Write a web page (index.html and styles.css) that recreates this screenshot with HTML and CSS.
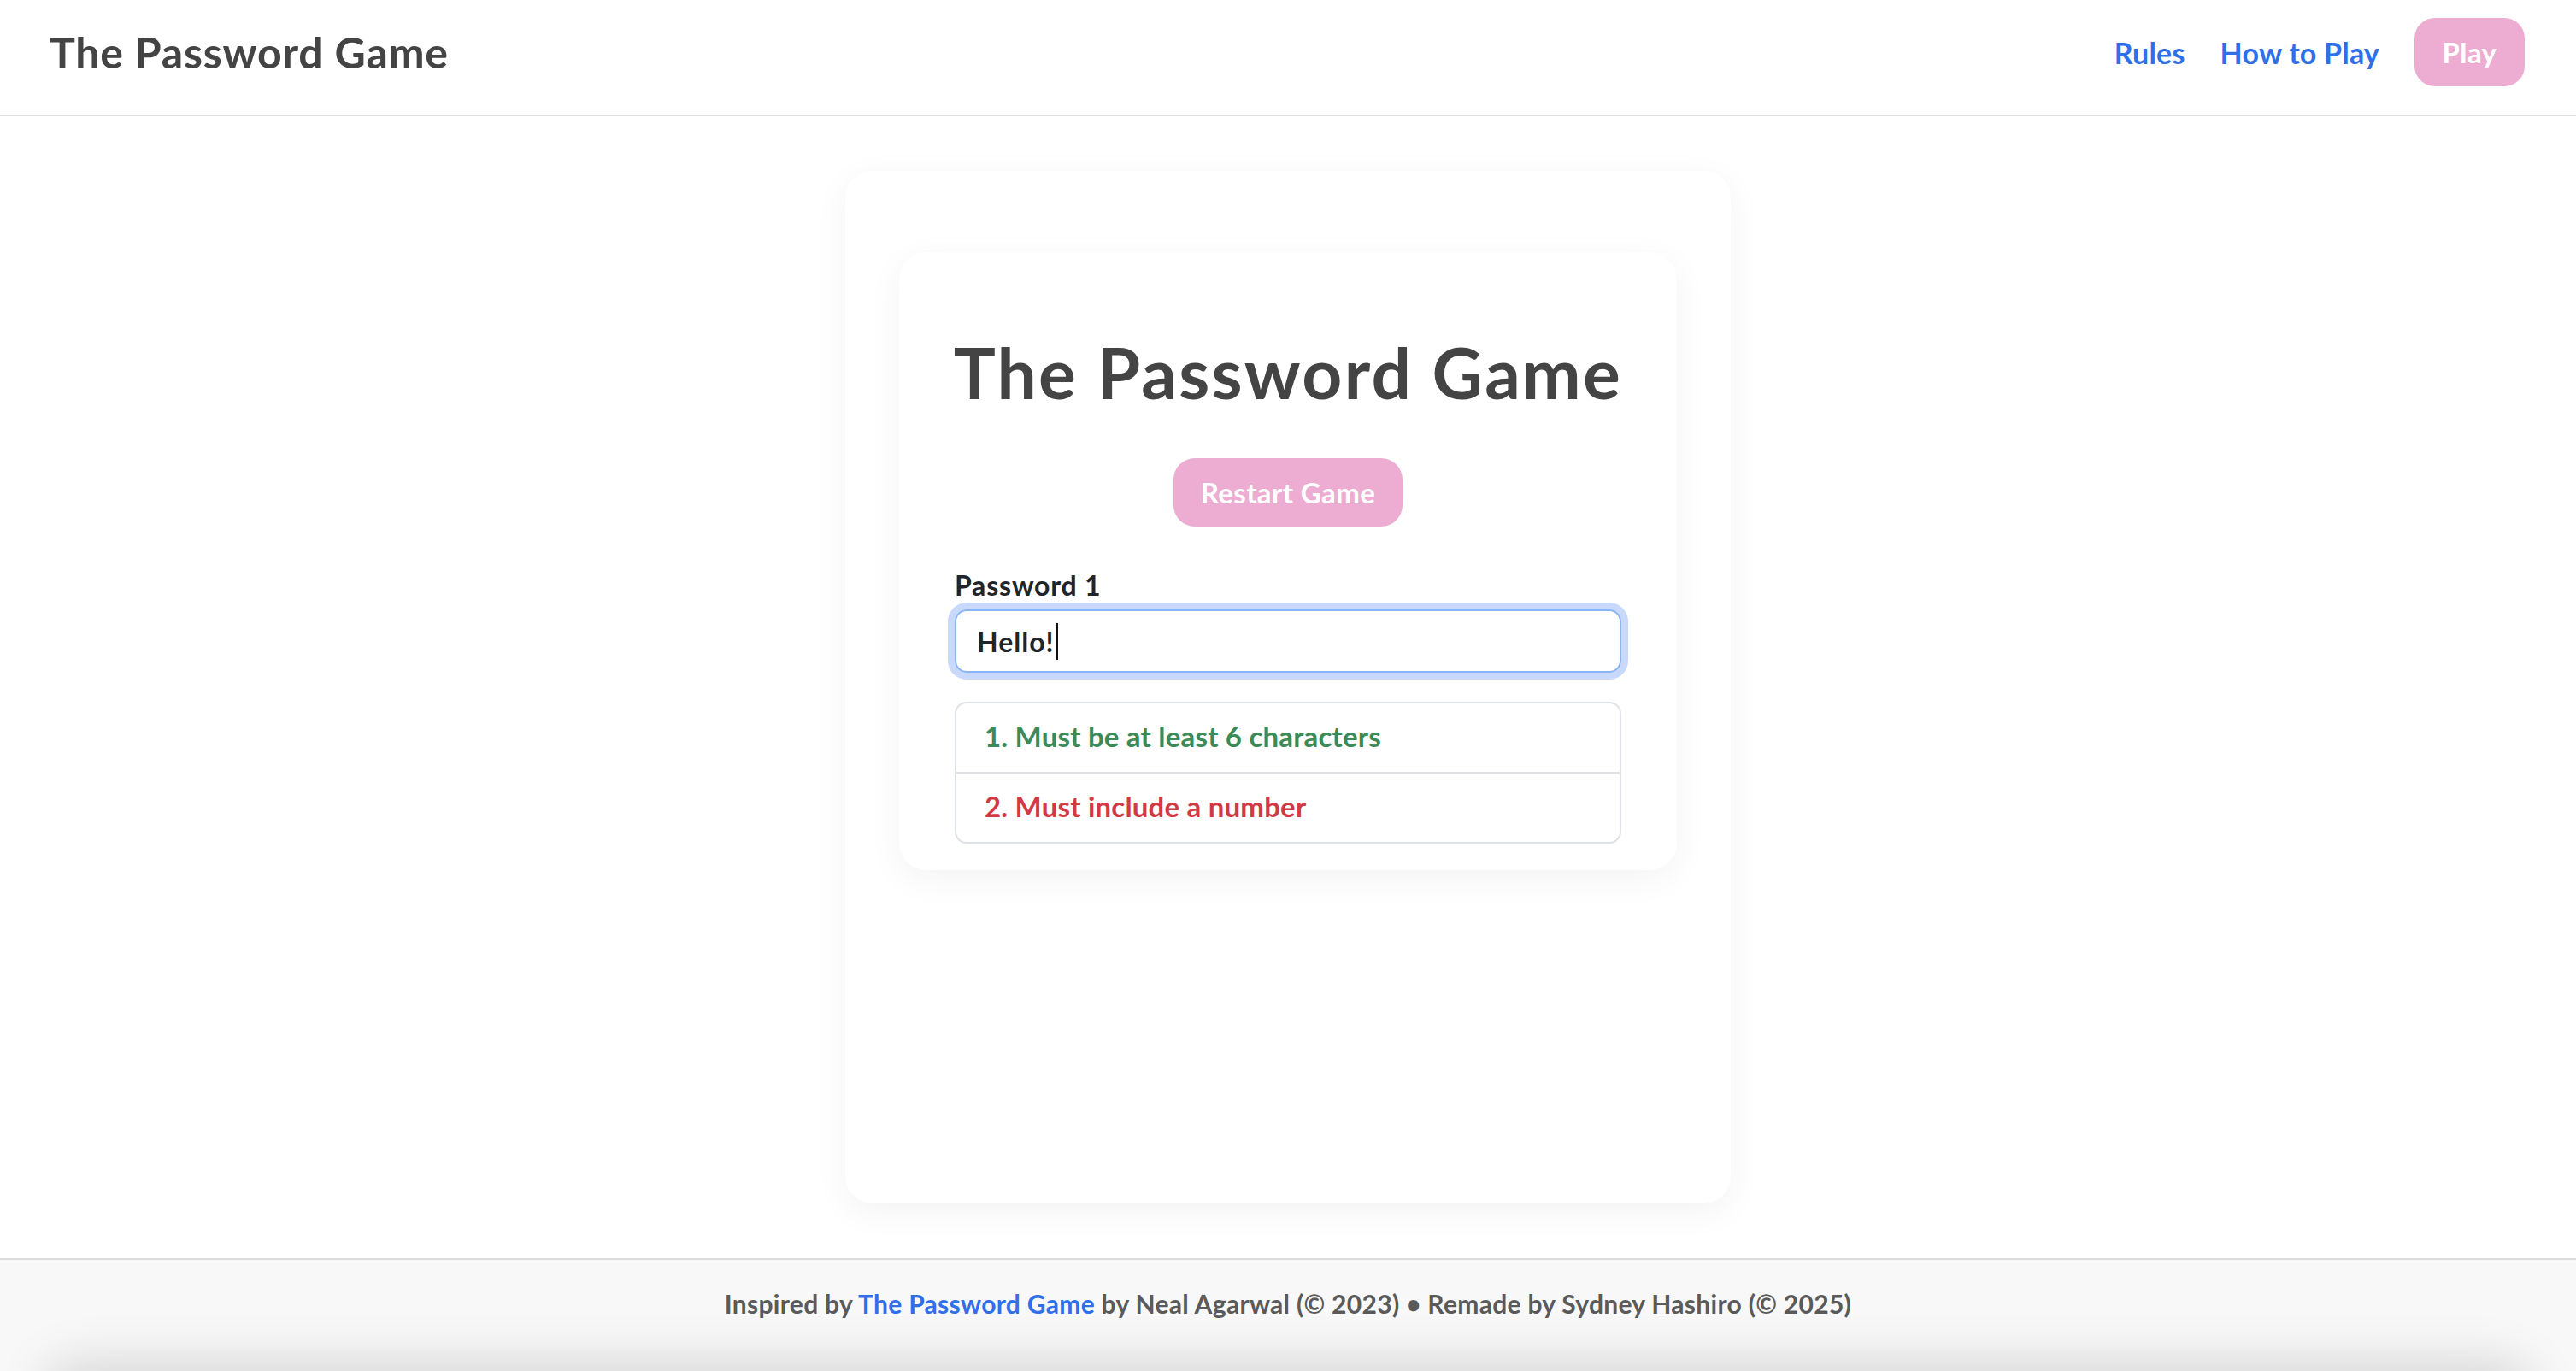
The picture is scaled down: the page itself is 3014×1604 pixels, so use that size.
FILE: index.html
```html
<!DOCTYPE html>
<html lang="en">
<head>
<meta charset="utf-8">
<title>The Password Game</title>
<link rel="stylesheet" href="styles.css">
</head>
<body>
<header class="topbar">
  <div class="brand">The Password Game</div>
  <nav class="nav">
    <a class="nav-link" href="#">Rules</a>
    <a class="nav-link" href="#">How to Play</a>
    <a class="btn-pink btn-play" href="#">Play</a>
  </nav>
</header>
<main class="main">
  <section class="outer-card">
    <div class="game-card">
      <h1 class="game-title">The Password Game</h1>
      <div class="restart-row"><button class="btn-pink btn-restart" type="button">Restart Game</button></div>
      <label class="pw-label">Password 1</label>
      <div class="pw-input" role="textbox"><span class="pw-text">Hello!</span><span class="caret"></span></div>
      <ul class="rules">
        <li class="rule ok">1. Must be at least 6 characters</li>
        <li class="rule bad">2. Must include a number</li>
      </ul>
    </div>
  </section>
</main>
<footer class="footer">
  <p class="footer-text">Inspired by <a class="footer-link" href="#">The Password Game</a> by Neal Agarwal (© 2023) • Remade by Sydney Hashiro (© 2025)</p>
</footer>
</body>
</html>
```
FILE: styles.css
```css
* { box-sizing: border-box; }
html, body { margin: 0; padding: 0; }
body {
  height: 100vh;
  display: flex;
  flex-direction: column;
  overflow: hidden;
  background: #fff;
  font-family: Lato, "Noto Sans", sans-serif;
  font-weight: 700;
}
a { text-decoration: none; }

.topbar {
  height: 136px;
  flex: 0 0 auto;
  display: flex;
  align-items: center;
  justify-content: space-between;
  padding: 0 60px 12px 58px;
  border-bottom: 2px solid #dedede;
}
.brand {
  font-size: 50px;
  letter-spacing: 0.8px;
  line-height: 1;
  color: #444;
}
.nav {
  display: flex;
  align-items: center;
  gap: 41px;
}
.nav-link {
  font-size: 34px;
  letter-spacing: 0.2px;
  color: #2f6fea;
}
.btn-pink {
  display: inline-flex;
  align-items: center;
  justify-content: center;
  height: 80px;
  background: #edadd2;
  color: #fff;
  border: none;
  border-radius: 24px;
  font-family: inherit;
  font-weight: 700;
  font-size: 33px;
  letter-spacing: 0.4px;
}
.btn-play { width: 129px; }

.main {
  flex: 1 1 auto;
  display: flex;
  justify-content: center;
  align-items: center;
}
.outer-card {
  width: 1036px;
  height: 1208px;
  border-radius: 32px;
  background: #fff;
  box-shadow: 0 10px 40px rgba(0,0,0,0.05);
  padding: 95px 63px 0;
}
.game-card {
  width: 910px;
  background: #fff;
  border-radius: 32px;
  box-shadow: 0 10px 40px rgba(0,0,0,0.05);
  padding: 99px 65px 31px;
}
.game-title {
  margin: 0 -30px;
  white-space: nowrap;
  text-align: center;
  font-size: 82px;
  letter-spacing: 2.3px;
  line-height: 1;
  color: #444;
  font-weight: 700;
}
.restart-row {
  display: flex;
  justify-content: center;
  margin-top: 60px;
}
.btn-restart {
  width: 268px;
  border-radius: 25px;
}
.pw-label {
  display: block;
  margin-top: 53px;
  font-size: 32px;
  letter-spacing: 0.8px;
  line-height: 1;
  color: #212529;
}
.pw-input {
  margin-top: 12px;
  height: 74px;
  border: 2px solid #8ab4f8;
  border-radius: 14px;
  box-shadow: 0 0 0 8px #c9d9fb;
  padding-left: 24px;
  display: flex;
  align-items: center;
  font-size: 32px;
  letter-spacing: 1px;
  color: #212529;
}
.caret {
  display: inline-block;
  width: 3px;
  height: 43px;
  background: #111;
  margin-left: 1px;
}
.rules {
  list-style: none;
  margin: 34px 0 0;
  padding: 0;
  border: 2px solid #dee2e6;
  border-radius: 14px;
}
.rule {
  height: 80px;
  display: flex;
  align-items: center;
  padding-left: 33px;
  padding-bottom: 4px;
  font-size: 33px;
  letter-spacing: 0.2px;
}
.rule + .rule {
  height: 82px;
  border-top: 2px solid #dee2e6;
}
.ok { color: #3b8a57; }
.bad { color: #d13a44; }

.footer {
  position: relative;
  flex: 0 0 132px;
  height: 132px;
  border-top: 2px solid #dcdcdc;
  background: #f8f8f8;
  padding-top: 36px;
}
.footer::after {
  content: "";
  position: absolute;
  left: 60px;
  right: 60px;
  top: 100%;
  height: 60px;
  border-radius: 40px;
  box-shadow: 0 0 60px 10px rgba(0,0,0,0.14);
}
.footer-text {
  margin: 0;
  text-align: center;
  font-size: 30px;
  letter-spacing: 0.3px;
  line-height: 1;
  color: #5a5a5a;
}
.footer-link { color: #2f6fea; }
```
